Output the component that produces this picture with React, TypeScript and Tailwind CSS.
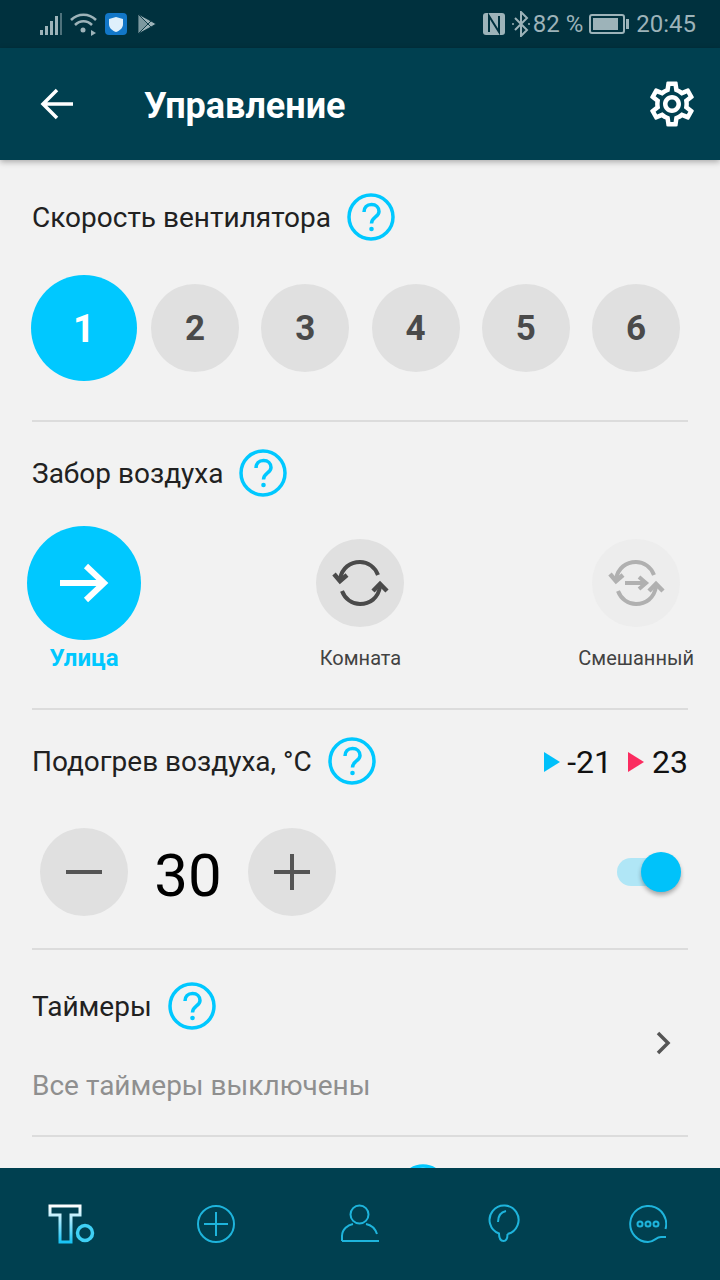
import { MdOutlineSettings } from "react-icons/md";

const Help = () => (
  <svg className="shrink-0" width="48" height="48" viewBox="0 0 48 48" fill="none" stroke="#00c8ff" strokeWidth="3.500">
    <circle cx="24" cy="24" r="22" />
    <path d="M17 19c0-4.500 3-7.500 7.500-7.500s7.500 3 7.500 7c0 5.500-7.500 5.500-7.500 12" />
    <circle cx="24.500" cy="36" r="2.300" fill="#00c8ff" stroke="none" />
  </svg>
);

const Title = ({ text }: { text: string }) => (
  <div className="flex h-12 items-center gap-4">
    <span className="pt-[2px] text-[28px] leading-none text-[#212121]">{text}</span>
    <Help />
  </div>
);

const Divider = () => <div className="mx-8 h-[2px] shrink-0 bg-[#dcdcdc]" />;

const Num = ({ n }: { n: number }) => (
  <div className="flex h-[88px] w-[88px] items-center justify-center rounded-full bg-[#e0e0e0] pt-[3px] text-[35px] font-bold text-[#4a4a4a]">
    {n}
  </div>
);

const CycleIcon = ({ mixed }: { mixed?: boolean }) => (
  <svg width="60" height="60" viewBox="0 0 60 60" fill="none" stroke="currentColor" strokeWidth="4">
    <path d="M10 26C12 15 20 9 30 9c8 0 15 5 18 13" />
    <path d="M50 34c-2 11-10 17-20 17-8 0-15-5-18-13" />
    <path d="M4 21l6 7 7-6" strokeWidth="4.500" />
    <path d="M43 38l7-7 7 7" strokeWidth="4.500" />
    {mixed && <path d="M19 30h20M33 24l7 6-7 6" />}
  </svg>
);

export default function App() {
  return (
    <div className="flex h-[1280px] w-[720px] flex-col overflow-hidden bg-[#f2f2f2] font-['Roboto',sans-serif]">
      <div className="flex h-12 shrink-0 items-center bg-[#00313e] pl-10 pr-6 text-[24px] text-[#9db3b9]">
        <svg width="24" height="24" viewBox="0 0 24 24" fill="currentColor">
          <rect x="0" y="18" width="3" height="5" />
          <rect x="5" y="14" width="3" height="9" />
          <rect x="10" y="9" width="3" height="14" />
          <rect x="15" y="4" width="3" height="19" />
          <rect x="20" y="1" width="2" height="22" opacity="0.5" />
        </svg>
        <svg className="ml-[6px]" width="28" height="24" viewBox="0 0 28 24" fill="none" stroke="currentColor" strokeWidth="2.500">
          <path d="M1 8c7-7 18-7 25 0" />
          <path d="M5 13c5-5 12-5 17 0" />
          <circle cx="13" cy="18" r="2.500" fill="currentColor" stroke="none" />
          <path d="M21 18l5 3-5 3z" fill="currentColor" stroke="none" />
        </svg>
        <div className="ml-[7px] flex h-[22px] w-[22px] items-center justify-center rounded-[4px] bg-[#1277c8]">
          <svg width="14" height="15" viewBox="0 0 14 15" fill="#dff0fb">
            <path d="M7 0l7 2v5c0 4-3 6.500-7 8-4-1.500-7-4-7-8V2z" />
          </svg>
        </div>
        <svg className="ml-[10px]" width="20" height="22" viewBox="0 0 20 22" fill="#9db3b9" stroke="#00313e" strokeWidth="0.800">
          <path d="M1 1l10 10L1 21z" opacity="0.8" />
          <path d="M1 1l13 7-3 3z" />
          <path d="M1 21l13-7-3-3z" />
          <path d="M14 8l5 3-5 3-3-3z" />
        </svg>
        <div className="flex-1" />
        <svg width="22" height="22" viewBox="0 0 22 22">
          <rect width="22" height="22" rx="3" fill="#9db3b9" />
          <path d="M6 19V3l10 16V3" fill="none" stroke="#00313e" strokeWidth="2" />
        </svg>
        <svg className="ml-[7px]" width="18" height="26" viewBox="0 0 18 26" fill="none" stroke="currentColor" strokeWidth="2">
          <path d="M3 7l12 12-6 6V1l6 6L3 19" />
          <circle cx="1" cy="13" r="1" fill="currentColor" stroke="none" />
          <circle cx="17" cy="13" r="1" fill="currentColor" stroke="none" />
        </svg>
        <span className="ml-[3px] leading-none">82 %</span>
        <div className="ml-[6px] flex h-[20px] w-[36px] items-center rounded-[3px] border-2 border-[#9db3b9] p-[2px] pr-[5px]">
          <div className="h-full w-full bg-[#9db3b9]" />
        </div>
        <div className="ml-[1px] h-[10px] w-[3px] bg-[#9db3b9]" />
        <span className="ml-[7px] leading-none">20:45</span>
      </div>

      <div className="z-10 flex h-[112px] shrink-0 items-center justify-between bg-[#004050] pl-10 pr-[21px] shadow-[0_2px_6px_rgba(0,0,0,0.3)]">
        <div className="flex items-center">
          <svg width="34" height="32" viewBox="0 0 34 32" fill="none" stroke="white" strokeWidth="3.500">
            <path d="M33 16H3M17 2L3 16l14 14" />
          </svg>
          <span className="ml-[70px] pt-[3px] text-[36px] font-bold leading-none text-white">Управление</span>
        </div>
        <MdOutlineSettings className="text-white" size={54} />
      </div>

      <div className="flex-1 overflow-hidden">
        <div className="ml-8 mt-[33px]">
          <Title text="Скорость вентилятора" />
        </div>
        <div className="ml-[31px] mr-10 mt-[34px] flex items-center">
          <div className="flex h-[106px] w-[106px] items-center justify-center rounded-full bg-[#00c8ff] pt-[2px] text-[38px] font-bold text-white">
            1
          </div>
          <div className="ml-[14px] flex flex-1 items-center justify-between">
            <Num n={2} />
            <Num n={3} />
            <Num n={4} />
            <Num n={5} />
            <Num n={6} />
          </div>
        </div>
        <div className="mt-[39px]">
          <Divider />
        </div>

        <div className="ml-8 mt-[27px]">
          <Title text="Забор воздуха" />
        </div>
        <div className="mt-[29px] grid h-[152px] grid-cols-3 pl-[27px] pr-[26px]">
          <div className="flex flex-col items-center justify-self-start">
            <div className="flex h-[114px] w-[114px] items-center justify-center rounded-full bg-[#00c8ff]">
              <svg width="50" height="40" viewBox="0 0 50 40" fill="none" stroke="white" strokeWidth="6">
                <path d="M1 20h44M27 3l18 17-18 17" />
              </svg>
            </div>
            <span className="mt-[2px] text-[24px] font-bold leading-8 text-[#00c8ff]">Улица</span>
          </div>
          <div className="flex flex-col items-center justify-self-center pt-[13px]">
            <div className="flex h-[88px] w-[88px] items-center justify-center rounded-full bg-[#e0e0e0] text-[#4a4a4a]">
              <CycleIcon />
            </div>
            <span className="mt-[19px] text-[20px] leading-6 text-[#424242]">Комната</span>
          </div>
          <div className="flex flex-col items-center justify-self-end pt-[13px]">
            <div className="flex h-[88px] w-[88px] items-center justify-center rounded-full bg-[#ededed] text-[#b0b0b0]">
              <CycleIcon mixed />
            </div>
            <span className="mt-[19px] text-[20px] leading-6 text-[#424242]">Смешанный</span>
          </div>
        </div>
        <div className="mt-[30px]">
          <Divider />
        </div>

        <div className="mx-8 mt-[27px] flex items-center justify-between">
          <Title text="Подогрев воздуха, °C" />
          <div className="flex items-center pt-[1px] text-[32px] leading-none text-[#111]">
            <svg width="16" height="20" viewBox="0 0 16 20" fill="#00c0fa">
              <path d="M0 0l16 10L0 20z" />
            </svg>
            <span className="ml-[7px]">-21</span>
            <svg className="ml-[16px]" width="16" height="20" viewBox="0 0 16 20" fill="#fb2c60">
              <path d="M0 0l16 10L0 20z" />
            </svg>
            <span className="ml-2">23</span>
          </div>
        </div>
        <div className="mt-[43px] flex items-center pl-10 pr-[55px]">
          <div className="flex h-[88px] w-[88px] items-center justify-center rounded-full bg-[#e0e0e0]">
            <div className="h-[4px] w-9 bg-[#555]" />
          </div>
          <span className="w-[120px] pt-2 text-center text-[60px] leading-none text-black">30</span>
          <div className="relative flex h-[88px] w-[88px] items-center justify-center rounded-full bg-[#e0e0e0]">
            <div className="h-[4px] w-9 bg-[#555]" />
            <div className="absolute h-9 w-[4px] bg-[#555]" />
          </div>
          <div className="flex-1" />
          <div className="relative h-7 w-[48px] rounded-full bg-[#b0e6f6]">
            <div className="absolute -right-4 -top-[6px] h-10 w-10 rounded-full bg-[#00c2fa] shadow-[0_3px_4px_rgba(0,0,0,0.3)]" />
          </div>
        </div>
        <div className="mt-[32px]">
          <Divider />
        </div>

        <div className="mx-8 mt-[32px] flex items-center justify-between">
          <div>
            <Title text="Таймеры" />
            <div className="mt-[36px] text-[28px] leading-[40px] text-[#8f8f8f]">Все таймеры выключены</div>
          </div>
          <svg className="mb-[3px] mr-[15px]" width="18" height="26" viewBox="0 0 18 26" fill="none" stroke="#555" strokeWidth="3.500">
            <path d="M3 3l10 10L3 23" />
          </svg>
        </div>
        <div className="mt-[29px]">
          <Divider />
        </div>
        <div className="ml-[399px] mt-[27px]">
          <Help />
        </div>
      </div>

      <div className="z-10 grid h-[112px] shrink-0 grid-cols-5 items-center justify-items-center bg-[#004050] pb-[1px] text-[#1eb4dc]">
        <svg width="48" height="40" viewBox="0 0 48 40" fill="none" strokeWidth="3">
          <defs>
            <linearGradient id="tg" x1="0" y1="0" x2="0" y2="1">
              <stop offset="0" stopColor="#ffffff" />
              <stop offset="1" stopColor="#19c4f5" />
            </linearGradient>
          </defs>
          <path d="M12 38V11H2V2h30v9H23v27z" stroke="url(#tg)" />
          <circle cx="37" cy="29" r="7.500" stroke="#3fd0f5" strokeWidth="3.500" />
        </svg>
        <svg width="38" height="38" viewBox="0 0 38 38" fill="none" stroke="currentColor" strokeWidth="2">
          <circle cx="19" cy="19" r="18" />
          <path d="M7 19h24M19 7v24" />
        </svg>
        <svg width="40" height="40" viewBox="0 0 40 40" fill="none" stroke="currentColor" strokeWidth="2">
          <circle cx="19.500" cy="10.500" r="9" />
          <path d="M2 37V32C2 25 8 21 13 20M26 20C31 21 35 24 37 30M2 37H39" />
        </svg>
        <svg width="32" height="40" viewBox="0 0 32 40" fill="none" stroke="currentColor" strokeWidth="2">
          <path d="M19.500 30A14.500 14.500 0 1 0 11 29.500C11 33 12 37 15.500 37C18.500 37 19.500 34 19.500 30" />
          <path d="M10 18c0-6 3-10 8-11" />
        </svg>
        <svg width="38" height="38" viewBox="0 0 38 38" fill="none" stroke="currentColor" strokeWidth="2">
          <path d="M36.500 24A18 18 0 1 0 19 37C25 37 27 32 32 32H37" />
          <circle cx="11" cy="19" r="2.500" />
          <circle cx="19" cy="19" r="2.500" />
          <circle cx="27" cy="19" r="2.500" />
        </svg>
      </div>
    </div>
  );
}
